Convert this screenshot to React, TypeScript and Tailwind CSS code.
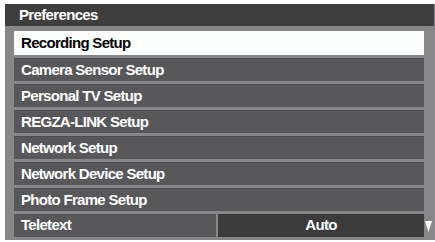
const items = [
  "Camera Sensor Setup",
  "Personal TV Setup",
  "REGZA-LINK Setup",
  "Network Setup",
  "Network Device Setup",
  "Photo Frame Setup",
];

export default function App() {
  return (
    <div
      className="w-[435px] h-[242px] bg-white pt-[4px] pl-[5px] overflow-hidden"
      style={{ fontFamily: '"Liberation Sans", Arial, sans-serif' }}
    >
      <div className="w-[430px] h-[236px] bg-[#87878a]">
        <div className="h-[22px] w-[429px] bg-[#3e3e3e] flex items-center pl-[14px] text-white font-bold text-[15px] tracking-[-0.65px]">
          Preferences
        </div>
        <div className="relative flex flex-col gap-[3px] pt-[5px] pl-[9px] pr-[11px]">
          <div className="h-[24px] bg-[#fdfefe] flex items-center pl-[7px] text-black font-bold text-[15px] tracking-[-0.7px]">
            Recording Setup
          </div>
          {items.map((label) => (
            <div
              key={label}
              className="h-[23px] bg-[#58585a] border-t border-[#4c4c4e] flex items-center pl-[7px] text-white font-bold text-[15px] tracking-[-0.7px]"
            >
              {label}
            </div>
          ))}
          <div className="h-[23px] flex gap-[2px]">
            <div className="w-[202px] bg-[#58585a] flex items-center pl-[7px] text-white font-bold text-[15px] tracking-[-0.7px]">
              Teletext
            </div>
            <div className="flex-1 bg-[#3b3b3b] flex items-center justify-center text-white font-bold text-[15px] tracking-[-0.7px]">
              Auto
            </div>
          </div>
          <svg
            className="absolute right-[3px] bottom-[5px]"
            width="7"
            height="11"
            viewBox="0 0 7 11"
          >
            <polygon points="0,0 7,0 3.5,11" fill="#ffffff" />
          </svg>
        </div>
      </div>
    </div>
  );
}
